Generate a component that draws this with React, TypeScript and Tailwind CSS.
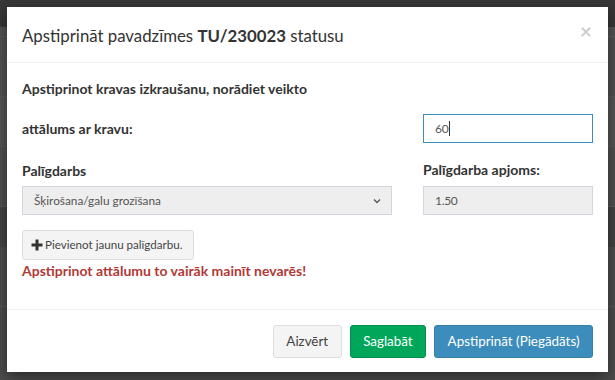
import React from "react";

export default function App() {
  return (
    <div className="relative w-[615px] h-[380px] overflow-hidden bg-[#4e4e4e] font-[Lato,'Noto_Sans',sans-serif]">
      {/* background page (dimmed) */}
      <div className="flex flex-col">
        <div className="h-[27px] bg-[#383838]" />
        <div className="h-[10px] bg-[#555555] border-b border-[#5e5e5e]" />
        <div className="h-[60px] bg-[#535353] border-b border-[#5c5c5c]" />
        <div className="h-[50px] bg-[#575757] border-b border-[#5c5c5c]" />
        <div className="h-[60px] bg-[#525252] border-b border-[#5c5c5c]" />
        <div className="h-[40px] bg-[#454545]" />
        <div className="h-[60px] bg-[#4f4f4f] border-b border-[#5a5a5a]" />
      </div>
      {/* modal */}
      <div className="absolute left-[7px] top-[7px] w-[601px] bg-white shadow-[0_5px_15px_rgba(0,0,0,0.5)] text-[#333] text-[14px]">
        <div className="flex items-center justify-between h-[56px] px-[15px] border-b border-[#f0f0f0]">
          <h4 className="text-[16.8px] leading-[26px] mt-[2px]">
            Apstiprināt pavadzīmes <b>TU/230023</b> statusu
          </h4>
          <span className="text-[21px] font-bold text-[#cfcfcf] leading-none mt-[-8px] mr-[1px]">×</span>
        </div>
        <div className="px-[15px] pt-[17px] pb-[8px] flex flex-col">
          <p className="font-bold leading-[18px]">Apstiprinot kravas izkraušanu, norādiet veikto</p>
          <div className="grid grid-cols-[370px_170px] gap-x-[31px] mt-[16px]">
            <div className="flex items-center font-bold">attālums ar kravu:</div>
            <div className="h-[29px] border border-[#3c8dbc] flex items-center px-[11px] text-[12px] text-[#555] tracking-[-0.3px]">
              60<span className="inline-block w-px h-[15px] bg-[#333] ml-px" />
            </div>
          </div>
          <div className="grid grid-cols-[370px_170px] gap-x-[31px] mt-[18px]">
            <div className="flex flex-col">
              <label className="font-bold leading-[20px]">Palīgdarbs</label>
              <div className="mt-[5px] h-[29px] bg-[#eeeeee] border border-[#d2d6de] flex items-center justify-between pl-[11px] pr-[8px] text-[11.8px] text-[#555]">
                <span>Šķirošana/galu grozīšana</span>
                <svg width="12" height="12" viewBox="0 0 12 12" fill="none" stroke="#555" strokeWidth="1.3">
                  <path d="M3 4.5l3 3 3-3" />
                </svg>
              </div>
            </div>
            <div className="flex flex-col">
              <label className="font-bold leading-[20px] mt-[-1px]">Palīgdarba apjoms:</label>
              <div className="mt-[6px] h-[29px] bg-[#eeeeee] border border-[#d2d6de] flex items-center px-[11px] text-[12px] text-[#555] tracking-[-0.3px]">1.50</div>
            </div>
          </div>
          <div className="mt-[15px]">
            <button className="h-[30px] pl-[8px] pr-[11px] bg-[#f4f4f4] border border-[#dddddd] rounded-[3px] text-[11.6px] text-[#444] flex items-center gap-[2px]">
              <svg width="12" height="12" viewBox="0 0 12 12" fill="#333">
                <rect x="4.5" y="0.5" width="3" height="11" />
                <rect x="0.5" y="4.5" width="11" height="3" />
              </svg>
              Pievienot jaunu palīgdarbu.
            </button>
          </div>
          <p className="font-bold text-[#b03a36] leading-[22px]">Apstiprinot attālumu to vairāk mainīt nevarēs!</p>
          <div className="h-[19px]" />
        </div>
        <div className="border-t border-[#f0f0f0] px-[15px] pt-[15px] pb-[14px] flex justify-end gap-[8px] text-[13.4px]">
          <button className="h-[33px] px-[12.5px] bg-[#f4f4f4] border border-[#dddddd] rounded-[3px] text-[#444]">Aizvērt</button>
          <button className="h-[33px] px-[12.5px] bg-[#00a65a] border border-[#008d4c] rounded-[3px] text-white">Saglabāt</button>
          <button className="h-[33px] px-[12.5px] bg-[#3c8dbc] border border-[#367fa9] rounded-[3px] text-white">Apstiprināt (Piegādāts)</button>
        </div>
      </div>
    </div>
  );
}
